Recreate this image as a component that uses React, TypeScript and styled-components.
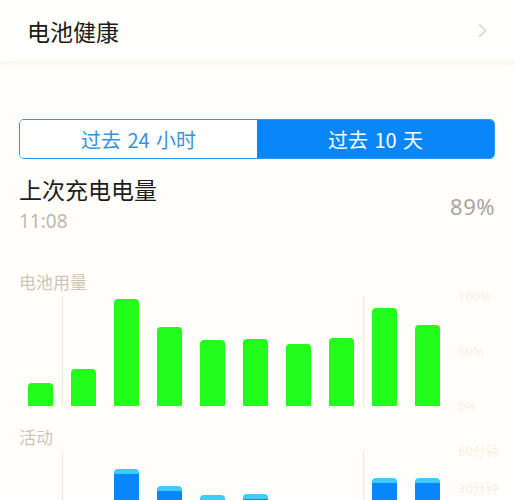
import React from "react";
import styled, { createGlobalStyle } from "styled-components";

const Global = createGlobalStyle`
  html, body { margin: 0; padding: 0; background: #fffefb; }
  body { font-family: "Noto Sans", "Noto Sans CJK SC", sans-serif; overflow: hidden; }
`;

const Page = styled.div`
  width: 515px;
  height: 500px;
  overflow: hidden;
`;

const HeaderRow = styled.div`
  height: 62px;
  background: #fffffe;
  border-bottom: 1px solid #f7f4ec;
  box-shadow: 0 3px 4px rgba(240, 232, 210, 0.35);
  display: flex;
  align-items: center;
  justify-content: space-between;
  padding: 0 27px 0 27px;
  box-sizing: border-box;
`;

const HeaderTitle = styled.div`
  font-family: "Noto Sans CJK SC", sans-serif;
  font-size: 23px;
  color: #1c1a16;
`;

const Chevron = styled.svg`
  width: 9px;
  height: 15px;
  margin-right: 1px;
`;

const Section = styled.div`
  padding: 0 20px 0 19px;
  display: flex;
  flex-direction: column;
`;

const Segmented = styled.div`
  margin-top: 57px;
  height: 40px;
  flex-shrink: 0;
  display: grid;
  grid-template-columns: 1fr 1fr;
  border: 1px solid #2b95f2;
  border-radius: 5px;
  overflow: hidden;
  box-sizing: border-box;
`;

const Seg = styled.div<{ $active?: boolean }>`
  display: flex;
  align-items: center;
  justify-content: center;
  font-family: "Noto Sans CJK SC", sans-serif;
  font-size: 20px;
  word-spacing: 2px;
  background: ${(p) => (p.$active ? "#0a86fb" : "#ffffff")};
  color: ${(p) => (p.$active ? "#ffffff" : "#3494e2")};
`;

const ChargeRow = styled.div`
  margin-top: 15px;
  display: flex;
  align-items: center;
  justify-content: space-between;
`;

const ChargeText = styled.div`
  display: flex;
  flex-direction: column;
`;

const ChargeTitle = styled.div`
  font-family: "Noto Sans CJK SC", sans-serif;
  font-size: 23px;
  line-height: 30px;
  color: #1f1d19;
`;

const ChargeTime = styled.div`
  font-size: 19px;
  line-height: 24px;
  margin-top: 5px;
  color: #bdb8ae;
`;

const ChargeValue = styled.div`
  font-size: 22px;
  letter-spacing: 0.5px;
  color: #aaa59b;
  margin-top: 4px;
`;

const ChartLabel = styled.div<{ $top: number }>`
  margin-top: ${(p) => p.$top}px;
  font-family: "Noto Sans CJK SC", sans-serif;
  font-size: 17px;
  line-height: 22px;
  color: #cfc5b4;
`;

const ChartWrap = styled.div<{ $h: number }>`
  display: flex;
  flex-shrink: 0;
  height: ${(p) => p.$h}px;
  margin-top: 3px;
`;

const Columns = styled.div`
  display: grid;
  grid-template-columns: repeat(10, 43px);
  align-items: end;
`;

const Column = styled.div<{ $line?: boolean }>`
  height: 100%;
  display: flex;
  align-items: flex-end;
  justify-content: center;
  border-left: ${(p) => (p.$line ? "1px solid #f1e8d6" : "1px solid transparent")};
  box-sizing: border-box;
`;

const GreenBar = styled.div`
  width: 25px;
  background: #22fd1c;
  border-radius: 4px 4px 0 0;
  margin-left: -1px;
`;

const BlueBar = styled.div`
  width: 25px;
  background: #0a86fb;
  border-top: 5px solid #3fcbfb;
  border-radius: 4px 4px 0 0;
  margin-left: -1px;
  box-sizing: border-box;
`;

const Axis = styled.div<{ $spread?: boolean }>`
  flex: 1;
  padding-left: 9px;
  display: flex;
  flex-direction: column;
  justify-content: ${(p) => (p.$spread ? "space-between" : "flex-start")};
  gap: ${(p) => (p.$spread ? "0" : "23px")};
  margin-top: -7px;
  margin-bottom: -7px;
`;

const AxisText = styled.div`
  font-size: 13px;
  line-height: 14px;
  white-space: nowrap;
  color: #f7f0e0;
`;

const usage = [23, 37, 107, 79, 66, 67, 62, 68, 98, 81];
const activity = [0, 0, 62, 45, 36, 37, 0, 0, 53, 53];

export default function App() {
  return (
    <Page>
      <Global />
      <HeaderRow>
        <HeaderTitle>电池健康</HeaderTitle>
        <Chevron viewBox="0 0 9 15">
          <path d="M1 1 L7.5 7.5 L1 14" fill="none" stroke="#d9d6d0" strokeWidth="1.6" />
        </Chevron>
      </HeaderRow>
      <Section>
        <Segmented>
          <Seg>过去 24 小时</Seg>
          <Seg $active>过去 10 天</Seg>
        </Segmented>
        <ChargeRow>
          <ChargeText>
            <ChargeTitle>上次充电电量</ChargeTitle>
            <ChargeTime>11:08</ChargeTime>
          </ChargeText>
          <ChargeValue>89%</ChargeValue>
        </ChargeRow>
        <ChartLabel $top={38}>电池用量</ChartLabel>
        <ChartWrap $h={110}>
          <Columns>
            {usage.map((h, i) => (
              <Column key={i} $line={i === 1 || i === 8}>
                <GreenBar style={{ height: h }} />
              </Column>
            ))}
          </Columns>
          <Axis $spread>
            <AxisText>100%</AxisText>
            <AxisText>50%</AxisText>
            <AxisText>0%</AxisText>
          </Axis>
        </ChartWrap>
        <ChartLabel $top={20}>活动</ChartLabel>
        <ChartWrap $h={80}>
          <Columns>
            {activity.map((h, i) => (
              <Column key={i} $line={i === 1 || i === 8}>
                {h > 0 && <BlueBar style={{ height: h }} />}
              </Column>
            ))}
          </Columns>
          <Axis>
            <AxisText>60分钟</AxisText>
            <AxisText>30分钟</AxisText>
          </Axis>
        </ChartWrap>
      </Section>
    </Page>
  );
}
